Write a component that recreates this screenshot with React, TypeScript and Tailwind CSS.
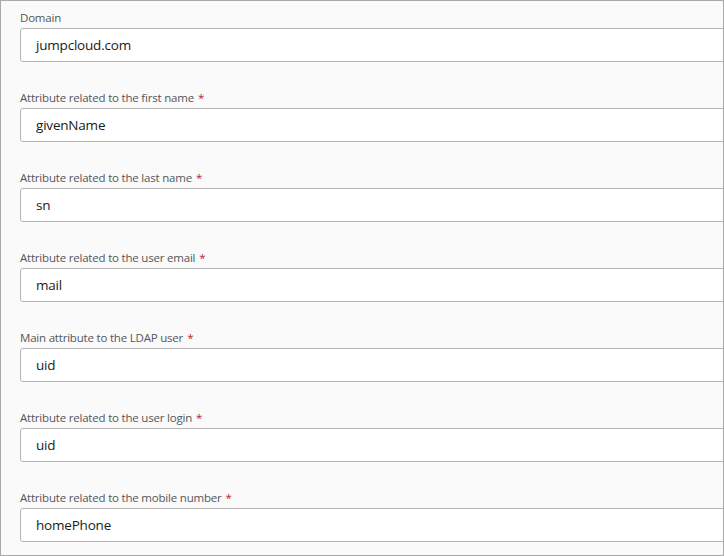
const fields = [
  { label: 'Domain', value: 'jumpcloud.com', required: false },
  { label: 'Attribute related to the first name', value: 'givenName', required: true },
  { label: 'Attribute related to the last name', value: 'sn', required: true },
  { label: 'Attribute related to the user email', value: 'mail', required: true },
  { label: 'Main attribute to the LDAP user', value: 'uid', required: true },
  { label: 'Attribute related to the user login', value: 'uid', required: true },
  { label: 'Attribute related to the mobile number', value: 'homePhone', required: true },
]

export default function App() {
  return (
    <div
      className="w-[724px] h-[556px] overflow-hidden border border-[#a9a9a9] bg-[#fafafa] pl-[19px] pt-[7px]"
      style={{ fontFamily: '"Open Sans", "Noto Sans", sans-serif' }}
    >
      <div className="flex flex-col gap-[26px] mr-[-6px]">
        {fields.map((f) => (
          <div key={f.label} className="flex flex-col">
            <label className="h-5 text-[11.5px] tracking-[-0.2px] leading-5 text-[#555]">
              {f.label}
              {f.required && <span className="ml-[4px] text-[#b3262d]">*</span>}
            </label>
            <div className="h-[34px] flex items-center rounded-l-[3px] border border-[#b5b5b5] bg-white pl-[15px] pt-px text-[13.5px] tracking-[-0.2px] text-[#1a1a1a]">
              {f.value}
            </div>
          </div>
        ))}
      </div>
    </div>
  )
}
